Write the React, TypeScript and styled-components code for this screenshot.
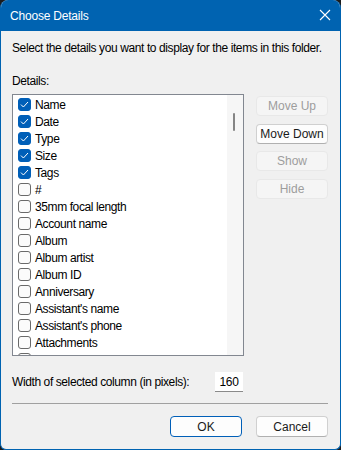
import React from 'react';
import styled, { createGlobalStyle } from 'styled-components';

const GlobalStyle = createGlobalStyle`
  html, body {
    margin: 0;
    padding: 0;
    background: #1c1c1c;
  }
  body {
    font-family: "Liberation Sans", Arial, sans-serif;
    font-size: 12px;
    letter-spacing: -0.4px;
  }
`;

const ITEMS = [
  { label: 'Name', checked: true },
  { label: 'Date', checked: true },
  { label: 'Type', checked: true },
  { label: 'Size', checked: true },
  { label: 'Tags', checked: true },
  { label: '#', checked: false },
  { label: '35mm focal length', checked: false },
  { label: 'Account name', checked: false },
  { label: 'Album', checked: false },
  { label: 'Album artist', checked: false },
  { label: 'Album ID', checked: false },
  { label: 'Anniversary', checked: false },
  { label: "Assistant's name", checked: false },
  { label: "Assistant's phone", checked: false },
  { label: 'Attachments', checked: false },
  { label: 'Attributes', checked: false },
];

const App = () => {
  return (
    <>
      <GlobalStyle />
      <Window>
        <TitleBar>
          <Title>Choose Details</Title>
          <CloseIcon width="12" height="12" viewBox="0 0 12 12">
            <path d="M1 1 L11 11 M11 1 L1 11" stroke="#fff" strokeWidth="1.1" fill="none" />
          </CloseIcon>
        </TitleBar>
        <Body>
          <Intro>Select the details you want to display for the items in this folder.</Intro>
          <SectionLabel>Details:</SectionLabel>
          <Main>
            <ListBox>
              <Rows>
                {ITEMS.map((item) => (
                  <Row key={item.label}>
                    <Check $checked={item.checked}>
                      {item.checked && (
                        <svg width="9" height="7" viewBox="0 0 9 7">
                          <path d="M1 3.6 L3.4 6 L8 1" stroke="#fff" strokeWidth="1" fill="none" />
                        </svg>
                      )}
                    </Check>
                    <RowLabel>{item.label}</RowLabel>
                  </Row>
                ))}
              </Rows>
              <ScrollTrack>
                <Thumb />
              </ScrollTrack>
            </ListBox>
            <SideButtons>
              <SideButton disabled>Move Up</SideButton>
              <SideButton>Move Down</SideButton>
              <SideButton disabled>Show</SideButton>
              <SideButton disabled>Hide</SideButton>
            </SideButtons>
          </Main>
          <WidthRow>
            <span>Width of selected column (in pixels):</span>
            <WidthInput>160</WidthInput>
          </WidthRow>
          <Separator />
          <Footer>
            <DialogButton $primary>OK</DialogButton>
            <DialogButton>Cancel</DialogButton>
          </Footer>
        </Body>
      </Window>
    </>
  );
};

const Window = styled.div`
  width: 341px;
  height: 450px;
  box-sizing: border-box;
  display: flex;
  flex-direction: column;
  background: #f0f0f0;
  border: 1px solid #0063b1;
  border-top: none;
  border-radius: 8px 8px 6px 6px;
  overflow: hidden;
  color: #000;
`;

const TitleBar = styled.div`
  height: 31px;
  flex: none;
  background: #0063b1;
  display: flex;
  align-items: center;
  justify-content: space-between;
  padding: 0 9px 0 9px;
`;

const Title = styled.span`
  color: #fff;
  font-size: 12px;
  letter-spacing: -0.2px;
  padding-top: 1px;
`;

const CloseIcon = styled.svg`
  display: block;
  margin-top: -1px;
`;

const Body = styled.div`
  flex: 1;
  display: flex;
  flex-direction: column;
  padding: 0 12px 0 11px;
`;

const Intro = styled.div`
  margin-top: 10px;
  height: 15px;
  line-height: 15px;
  white-space: nowrap;
`;

const SectionLabel = styled.div`
  margin-top: 18px;
  height: 15px;
  line-height: 15px;
`;

const Main = styled.div`
  margin-top: 5px;
  display: flex;
  gap: 12px;
`;

const ListBox = styled.div`
  width: 233px;
  height: 262px;
  box-sizing: border-box;
  border: 1px solid #828790;
  background: #fff;
  display: flex;
  overflow: hidden;
`;

const Rows = styled.div`
  flex: 1;
  padding-top: 1px;
  overflow: hidden;
`;

const Row = styled.div`
  height: 17px;
  display: flex;
  align-items: center;
  padding-left: 5px;
`;

const Check = styled.div<{ $checked: boolean }>`
  width: 13px;
  height: 13px;
  box-sizing: border-box;
  border-radius: 3px;
  display: flex;
  align-items: center;
  justify-content: center;
  background: ${(p) => (p.$checked ? '#005fb8' : '#fbfbfb')};
  border: 1px solid ${(p) => (p.$checked ? '#005fb8' : '#6a6a6a')};
`;

const RowLabel = styled.span`
  margin-left: 4px;
  white-space: nowrap;
`;

const ScrollTrack = styled.div`
  width: 16px;
  flex: none;
  background: #f6f6f6;
  position: relative;
`;

const Thumb = styled.div`
  position: absolute;
  left: 6px;
  top: 18px;
  width: 2px;
  height: 18px;
  border-radius: 1px;
  background: #858585;
`;

const SideButtons = styled.div`
  display: flex;
  flex-direction: column;
  gap: 7.5px;
  padding-top: 2px;
`;

const SideButton = styled.button`
  width: 72px;
  height: 20px;
  box-sizing: border-box;
  padding: 0;
  font: inherit;
  font-size: 12px;
  border-radius: 4px;
  color: ${(p) => (p.disabled ? '#9d9d9d' : '#1a1a1a')};
  background: ${(p) => (p.disabled ? '#f5f5f5' : '#fdfdfd')};
  border: 1px solid ${(p) => (p.disabled ? '#e8e8e8' : '#d0d0d0')};
  border-bottom-color: ${(p) => (p.disabled ? '#e8e8e8' : '#b0b0b0')};
`;

const WidthRow = styled.div`
  margin-top: 16px;
  height: 20px;
  display: flex;
  align-items: center;
  justify-content: space-between;
  padding-right: 85px;
`;

const WidthInput = styled.div`
  width: 28px;
  height: 20px;
  box-sizing: border-box;
  background: #fff;
  border-bottom: 1px solid #8a8a8a;
  display: flex;
  align-items: center;
  justify-content: center;
`;

const Separator = styled.div`
  margin-top: 11px;
  height: 1px;
  background: #a0a0a0;
`;

const Footer = styled.div`
  margin-top: 12px;
  display: flex;
  justify-content: flex-end;
  gap: 14px;
`;

const DialogButton = styled.button<{ $primary?: boolean }>`
  width: 72px;
  height: 21px;
  box-sizing: border-box;
  padding: 0;
  font: inherit;
  font-size: 12px;
  color: #1a1a1a;
  background: #fdfdfd;
  border-radius: 4px;
  border: 1px solid ${(p) => (p.$primary ? '#005fb8' : '#d0d0d0')};
  border-bottom-color: ${(p) => (p.$primary ? '#005fb8' : '#b0b0b0')};
`;

export default App;
